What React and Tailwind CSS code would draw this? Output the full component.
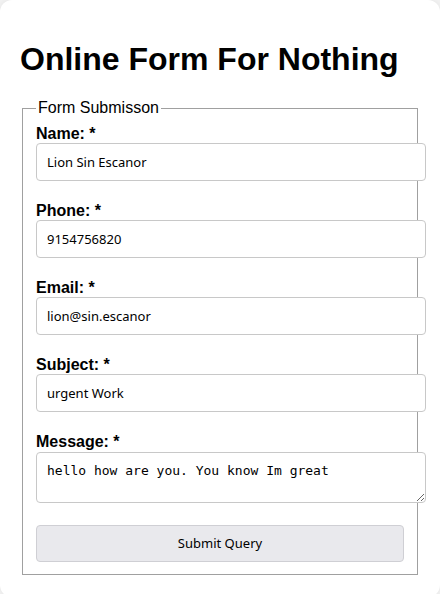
import { useState } from 'react';

const fields = [
  { id: 'name', label: 'Name:', type: 'text', value: 'Lion Sin Escanor' },
  { id: 'phone', label: 'Phone:', type: 'tel', value: '9154756820' },
  { id: 'email', label: 'Email:', type: 'email', value: 'lion@sin.escanor' },
  { id: 'subject', label: 'Subject:', type: 'text', value: 'urgent Work' },
];

export default function App() {
  const [values, setValues] = useState(
    Object.fromEntries(fields.map((f) => [f.id, f.value]))
  );
  const [message, setMessage] = useState('hello how are you. You know Im great');

  return (
    <div className="min-h-[594px] bg-[#f2f2f2] font-['Liberation_Sans',Arial,sans-serif] text-black">
      <div className="bg-white rounded-[12px] shadow-[0_0_6px_rgba(0,0,0,0.06)] px-5 pt-5 pb-[22px]">
        <h1 className="text-[32px] font-bold leading-[37px] my-[21px]">Online Form For Nothing</h1>
        <form onSubmit={(e) => e.preventDefault()}>
          <fieldset className="min-w-0 mx-[2px] border border-[#a0a0a0] px-[13px] pt-[8px] pb-[12px]">
            <legend className="px-[2px] text-[16px] leading-[18px]">Form Submisson</legend>
            {fields.map((f) => (
              <div key={f.id} className="mb-[21px]">
                <label htmlFor={f.id} className="block text-[16px] font-bold leading-[18px]">
                  {f.label} *
                </label>
                <input
                  id={f.id}
                  type={f.type}
                  value={values[f.id]}
                  onChange={(e) => setValues({ ...values, [f.id]: e.target.value })}
                  className="block w-[390px] h-[38px] px-[10px] border border-[#c8c8c8] rounded-[4px] bg-white text-[13px] font-['Noto_Sans',sans-serif] text-black outline-none"
                />
              </div>
            ))}
            <div className="mb-[22px]">
              <label htmlFor="message" className="block text-[16px] font-bold leading-[18px]">
                Message: *
              </label>
              <textarea
                id="message"
                value={message}
                onChange={(e) => setMessage(e.target.value)}
                className="block mt-[1px] w-[390px] h-[51px] px-[10px] py-[10px] border border-[#c8c8c8] rounded-[4px] bg-white text-[13px] leading-[16px] font-['DejaVu_Sans_Mono',monospace] text-black outline-none"
              />
            </div>
            <button
              type="submit"
              className="block w-full h-[37px] border border-[#cfcfd4] rounded-[4px] bg-[#e9e9ed] text-[13px] font-['Noto_Sans',sans-serif] text-black"
            >
              Submit Query
            </button>
          </fieldset>
        </form>
      </div>
    </div>
  );
}
